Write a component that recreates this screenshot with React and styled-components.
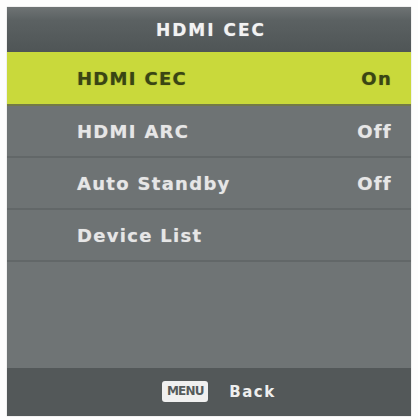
import React from "react";
import styled, { createGlobalStyle } from "styled-components";

const items = [
  { label: "HDMI CEC", value: "On" },
  { label: "HDMI ARC", value: "Off" },
  { label: "Auto Standby", value: "Off" },
  { label: "Device List", value: "" },
];

export default function App() {
  return (
    <>
      <GlobalStyle />
      <Screen>
        <Panel>
          <Header>HDMI CEC</Header>
          <List>
            {items.map((item, i) => (
              <Row key={item.label} active={i === 0}>
                <Label>{item.label}</Label>
                <Value>{item.value}</Value>
              </Row>
            ))}
          </List>
          <Filler />
          <Footer>
            <KeyBadge>MENU</KeyBadge>
            <FooterText>Back</FooterText>
          </Footer>
        </Panel>
      </Screen>
    </>
  );
}

const GlobalStyle = createGlobalStyle`
  body {
    margin: 0;
    background: #fdfdfd;
    font-family: "DejaVu Sans", "Liberation Sans", sans-serif;
  }
`;

const Screen = styled.div`
  width: 418px;
  height: 420px;
  padding: 7px 7px 4px 7px;
  box-sizing: border-box;
`;

const Panel = styled.div`
  height: 100%;
  display: flex;
  flex-direction: column;
  background: #6f7475;
  box-shadow: 0 0 1px rgba(0, 0, 0, 0.3);
`;

const Header = styled.div`
  height: 45px;
  display: flex;
  align-items: center;
  justify-content: center;
  background: linear-gradient(#6e7374 0%, #5b6162 30%, #4f5556 100%);
  color: #f2f2f2;
  font-size: 17px;
  font-weight: bold;
  letter-spacing: 2px;
  padding-left: 4px;
  text-shadow: 0 0 1px rgba(255, 255, 255, 0.5);
`;

const List = styled.div`
  display: flex;
  flex-direction: column;
`;

const Row = styled.div`
  height: ${(p) => (p.active ? "54px" : "52px")};
  display: flex;
  align-items: center;
  justify-content: space-between;
  padding: 0 19px 0 70px;
  box-sizing: border-box;
  background: ${(p) => (p.active ? "#c9d93b" : "#6e7374")};
  border-bottom: 2px solid ${(p) => (p.active ? "#737a46" : "#626768")};
  color: ${(p) => (p.active ? "#3a4514" : "#e6e6e6")};
  font-size: 18px;
  font-weight: bold;
  letter-spacing: 1.3px;
  text-shadow: 0 0 1px
    ${(p) => (p.active ? "rgba(40, 50, 10, 0.5)" : "rgba(255,255,255,0.4)")};
`;

const Label = styled.span``;

const Value = styled.span``;

const Filler = styled.div`
  flex: 1;
  background: #6f7475;
`;

const Footer = styled.div`
  height: 48px;
  display: flex;
  align-items: center;
  justify-content: center;
  gap: 21px;
  background: #535859;
  padding-left: 20px;
`;

const KeyBadge = styled.span`
  width: 46px;
  height: 21px;
  box-sizing: border-box;
  display: flex;
  align-items: center;
  justify-content: center;
  background: #f0f0f0;
  border-radius: 3px;
  color: #555a5b;
  font-size: 12px;
  font-weight: bold;
  letter-spacing: -0.8px;
  margin-top: -2px;
`;

const FooterText = styled.span`
  color: #eeeeee;
  font-size: 15px;
  font-weight: bold;
  letter-spacing: 1.5px;
`;
